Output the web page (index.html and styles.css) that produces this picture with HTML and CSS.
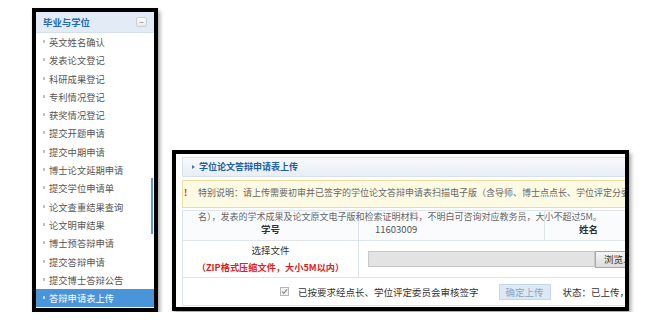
FILE: index.html
```html
<!DOCTYPE html>
<html lang="zh-CN">
<head>
  <meta charset="UTF-8" />
  <title>答辩申请表上传</title>
  <link rel="stylesheet" href="styles.css">
</head>
<body>
  <div class="page">
    <div class="shot side">
      <div class="side-head">
        <span>毕业与学位</span>
        <i class="fold">−</i>
      </div>
      <ul class="menu">
        <li>英文姓名确认</li>
        <li>发表论文登记</li>
        <li>科研成果登记</li>
        <li>专利情况登记</li>
        <li>获奖情况登记</li>
        <li>提交开题申请</li>
        <li>提交中期申请</li>
        <li>博士论文延期申请</li>
        <li>提交学位申请单</li>
        <li>论文查重结果查询</li>
        <li>论文明审结果</li>
        <li>博士预答辩申请</li>
        <li>提交答辩申请</li>
        <li>提交博士答辩公告</li>
        <li class="on">答辩申请表上传</li>
      </ul>
      <div class="thumb"></div>
    </div>

    <div class="shot main">
      <div class="inner">
        <div class="title">学位论文答辩申请表上传</div>
        <div class="notice">
          <b>!</b>特别说明：请上传需要初审并已签字的学位论文答辩申请表扫描电子版（含导师、博士点点长、学位评定分委员会主席签<br>名），发表的学术成果及论文原文电子版和检索证明材料，不明白可咨询对应教务员，大小不超过5M。
        </div>
        <table class="form">
          <colgroup>
            <col class="c1"><col class="c2"><col class="c3"><col class="c4">
          </colgroup>
          <tr class="r1">
            <th>学号</th>
            <td class="val">11603009</td>
            <th>姓名</th>
            <td class="val"></td>
          </tr>
          <tr class="r2">
            <th class="file-label">选择文件<br><em>（ZIP格式压缩文件，大小5M以内）</em></th>
            <td colspan="3" class="val">
              <div class="file">
                <span class="path"></span>
                <span class="browse">浏览...</span>
              </div>
            </td>
          </tr>
          <tr class="r3">
            <td colspan="4" class="actions">
              <div class="act-row">
                <svg class="check" width="9" height="9" viewBox="0 0 9 9">
                  <rect x="0.5" y="0.5" width="8" height="8" fill="#f2f2f2" stroke="#b5b5b5"/>
                  <path d="M2 4.6 L3.8 6.4 L7 2.4" fill="none" stroke="#8a8a8a" stroke-width="1.3"/>
                </svg>
                <span>已按要求经点长、学位评定委员会审核签字</span>
                <span class="btn">确定上传</span>
                <span class="state">状态：已上传，请等待审核</span>
              </div>
            </td>
          </tr>
        </table>
      </div>
    </div>
  </div>
</body>
</html>
```

FILE: styles.css
```css
body {
  margin: 0;
  background: #fff;
  font-family: "Noto Sans CJK SC", "Liberation Sans", sans-serif;
}

.page {
  display: flex;
  align-items: flex-start;
  padding-left: 32px;
}

.shot {
  border: 4px solid #000;
  background: #fff;
  box-shadow: 2px 3px 4px rgba(0,0,0,0.35);
  overflow: hidden;
}

/* left menu */
.side {
  width: 118px;
  height: 296px;
  margin-top: 8px;
  position: relative;
}

.side-head {
  height: 20px;
  background: #e3ecf6;
  border-bottom: 1px solid #d3dfec;
  display: flex;
  align-items: center;
  justify-content: space-between;
  padding: 0 7px;
  font-size: 9.4px;
  font-weight: bold;
  color: #2468b8;
}

.fold {
  width: 9px;
  height: 8px;
  border: 1px solid #c9d0d8;
  border-radius: 2px;
  background: linear-gradient(#fdfdfd, #e6e9ec);
  font-style: normal;
  font-weight: normal;
  font-size: 8px;
  line-height: 8px;
  text-align: center;
  color: #777;
}

.menu {
  list-style: none;
  margin: 0;
  padding: 0;
}

.menu li {
  height: 18.3px;
  line-height: 18.3px;
  padding-left: 13px;
  font-size: 9.3px;
  color: #555;
  position: relative;
  white-space: nowrap;
}

.menu li::before {
  content: "";
  position: absolute;
  left: 7px;
  top: 7px;
  width: 2px;
  height: 3px;
  background: #b4c2d2;
}

.menu li.on {
  background: #4a94d9;
  color: #fff;
}

.menu li.on::before { background: #bcd8f3; }

.thumb {
  position: absolute;
  right: 1px;
  top: 166px;
  width: 2px;
  height: 56px;
  background: #5d97d6;
}

/* right form */
.main {
  width: 449px;
  height: 153px;
  margin-top: 150px;
  margin-left: 14px;
}

.inner {
  width: 554px;
  padding: 3px 0 0 6px;
}

.title {
  height: 18px;
  line-height: 18px;
  border: 1px solid #d8e2ec;
  background: linear-gradient(#f7f9fc, #e8eef5);
  padding-left: 16px;
  font-size: 9px;
  font-weight: bold;
  color: #1d5ea6;
  position: relative;
}

.title::before {
  content: "";
  position: absolute;
  left: 9px;
  top: 7px;
  border-left: 3px solid #3a78bd;
  border-top: 2.5px solid transparent;
  border-bottom: 2.5px solid transparent;
}

.notice {
  margin-top: 3px;
  height: 26px;
  border: 1px solid #f1dc9e;
  background: #fefbe5;
  padding-left: 15px;
  font-size: 9px;
  line-height: 24px;
  color: #666;
  white-space: nowrap;
  position: relative;
}

.notice b {
  position: absolute;
  left: 1px;
  top: 0;
  color: #e02a1a;
}

.form {
  margin-top: 2px;
  width: 548px;
  border-collapse: collapse;
  table-layout: fixed;
  font-size: 9.5px;
  color: #333;
}

.c1 { width: 176px; }
.c2 { width: 186px; }
.c3 { width: 88px; }

.form th,
.form td {
  border: 1px solid #dfe5ec;
  padding: 0;
}

.form th {
  text-align: center;
  color: #333;
}

.form .val {
  padding-left: 16px;
  color: #555;
}

.r1 { height: 30px; }
.r1 th, .r1 td { padding-top: 6px; background: #fafbfc; }
.r2 { height: 37px; }
.r3 { height: 28px; }

.file-label {
  line-height: 17px;
  font-weight: normal;
}

.file-label em {
  font-style: normal;
  font-weight: bold;
  color: #e02020;
  font-size: 9.2px;
}

.r2 .val { padding-left: 9px; }

.file {
  display: flex;
  align-items: center;
}

.path {
  width: 225px;
  height: 14px;
  border: 1px solid #c8c8c8;
  background: #e3e3e3;
}

.browse {
  height: 15px;
  line-height: 15px;
  padding: 0 8px;
  border: 1px solid #a9a9a9;
  background: linear-gradient(#f5f5f5, #dcdcdc);
  color: #333;
  font-size: 9.5px;
}

.actions {
  padding-left: 97px !important;
}

.act-row {
  display: flex;
  align-items: center;
  white-space: nowrap;
}

.check { margin-right: 9px; }

.btn {
  margin-left: 20px;
  height: 14px;
  line-height: 14px;
  padding: 0 6px;
  border: 1px solid #c7d7e7;
  background: #dce9f4;
  color: #8aa6c2;
}

.state {
  margin-left: 12px;
  color: #333;
}
```
